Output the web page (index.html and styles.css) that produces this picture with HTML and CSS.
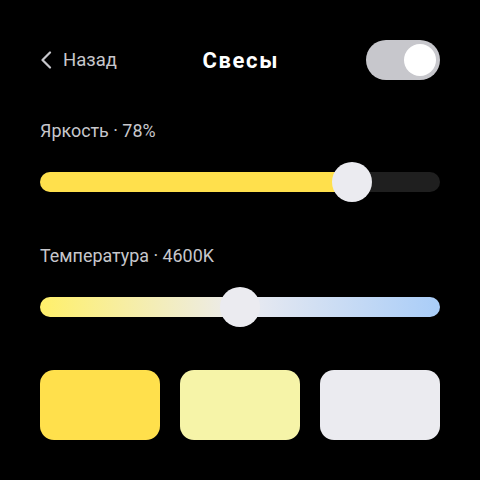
FILE: index.html
```html
<!DOCTYPE html>
<html lang="ru">
<head>
<meta charset="utf-8">
<link rel="stylesheet" href="styles.css">
</head>
<body>
<div class="screen">
  <header class="header">
    <button class="back">
      <svg class="chev" width="12" height="18" viewBox="0 0 12 18"><path d="M10 1.5 L2.5 9 L10 16.5" fill="none" stroke="#c7c7cc" stroke-width="2.2" stroke-linecap="round" stroke-linejoin="round"/></svg>
      <span>Назад</span>
    </button>
    <h1 class="title">Свесы</h1>
    <div class="toggle"><div class="knob"></div></div>
  </header>

  <div class="label label-first">Яркость · 78%</div>
  <div class="slider">
    <div class="track dark"><div class="fill" style="width:78%"></div></div>
    <div class="thumb" style="left:78%"></div>
  </div>

  <div class="label label-second">Температура · 4600K</div>
  <div class="slider">
    <div class="track grad"></div>
    <div class="thumb" style="left:50%"></div>
  </div>

  <div class="swatches">
    <div class="swatch s1"></div>
    <div class="swatch s2"></div>
    <div class="swatch s3"></div>
  </div>
</div>
</body>
</html>
```
FILE: styles.css
```css
html, body {
  margin: 0;
  padding: 0;
  background: #000;
}
body {
  font-family: Roboto, "Noto Sans", sans-serif;
  color: #fff;
  width: 480px;
  height: 480px;
  overflow: hidden;
}
.screen {
  padding: 40px 40px 0 40px;
  display: flex;
  flex-direction: column;
}
.header {
  position: relative;
  height: 40px;
  display: flex;
  align-items: center;
  justify-content: space-between;
}
.back {
  background: none;
  border: 0;
  padding: 0;
  display: flex;
  align-items: center;
  gap: 11px;
  color: #c7c7cc;
  font-family: inherit;
  font-size: 18.5px;
}
.chev { display: block; }
.title {
  position: absolute;
  left: 0;
  right: 0;
  text-align: center;
  margin: 0;
  padding-left: 1.6px;
  font-size: 22px;
  font-weight: 700;
  letter-spacing: 1.6px;
  pointer-events: none;
}
.toggle {
  width: 74px;
  height: 40px;
  border-radius: 20px;
  background: #c7c7cc;
  display: flex;
  align-items: center;
  justify-content: flex-end;
  padding: 0 4px;
  box-sizing: border-box;
}
.knob {
  width: 32px;
  height: 32px;
  border-radius: 50%;
  background: #fff;
}
.label {
  font-size: 17.9px;
  line-height: 20px;
  height: 20px;
  color: #c7c7cc;
}
.label-first { margin-top: 41px; }
.label-second { margin-top: 44px; }
.slider {
  position: relative;
  height: 40px;
  margin-top: 21px;
  display: flex;
  align-items: center;
}
.track {
  width: 100%;
  height: 20px;
  border-radius: 10px;
  overflow: hidden;
}
.dark { background: #1f1f1f; }
.fill {
  height: 100%;
  background: #ffe04c;
}
.grad {
  background: linear-gradient(90deg, #fff06a 0%, #ebebf0 50%, #a9cdf8 100%);
}
.thumb {
  position: absolute;
  top: 0;
  width: 40px;
  height: 40px;
  margin-left: -20px;
  border-radius: 50%;
  background: #ebebf0;
}
.swatches {
  margin-top: 43px;
  display: flex;
  gap: 20px;
}
.swatch {
  flex: 1;
  height: 70px;
  border-radius: 14px;
}
.s1 { background: #ffe04c; }
.s2 { background: #f6f4a8; }
.s3 { background: #ebebf0; }
```
